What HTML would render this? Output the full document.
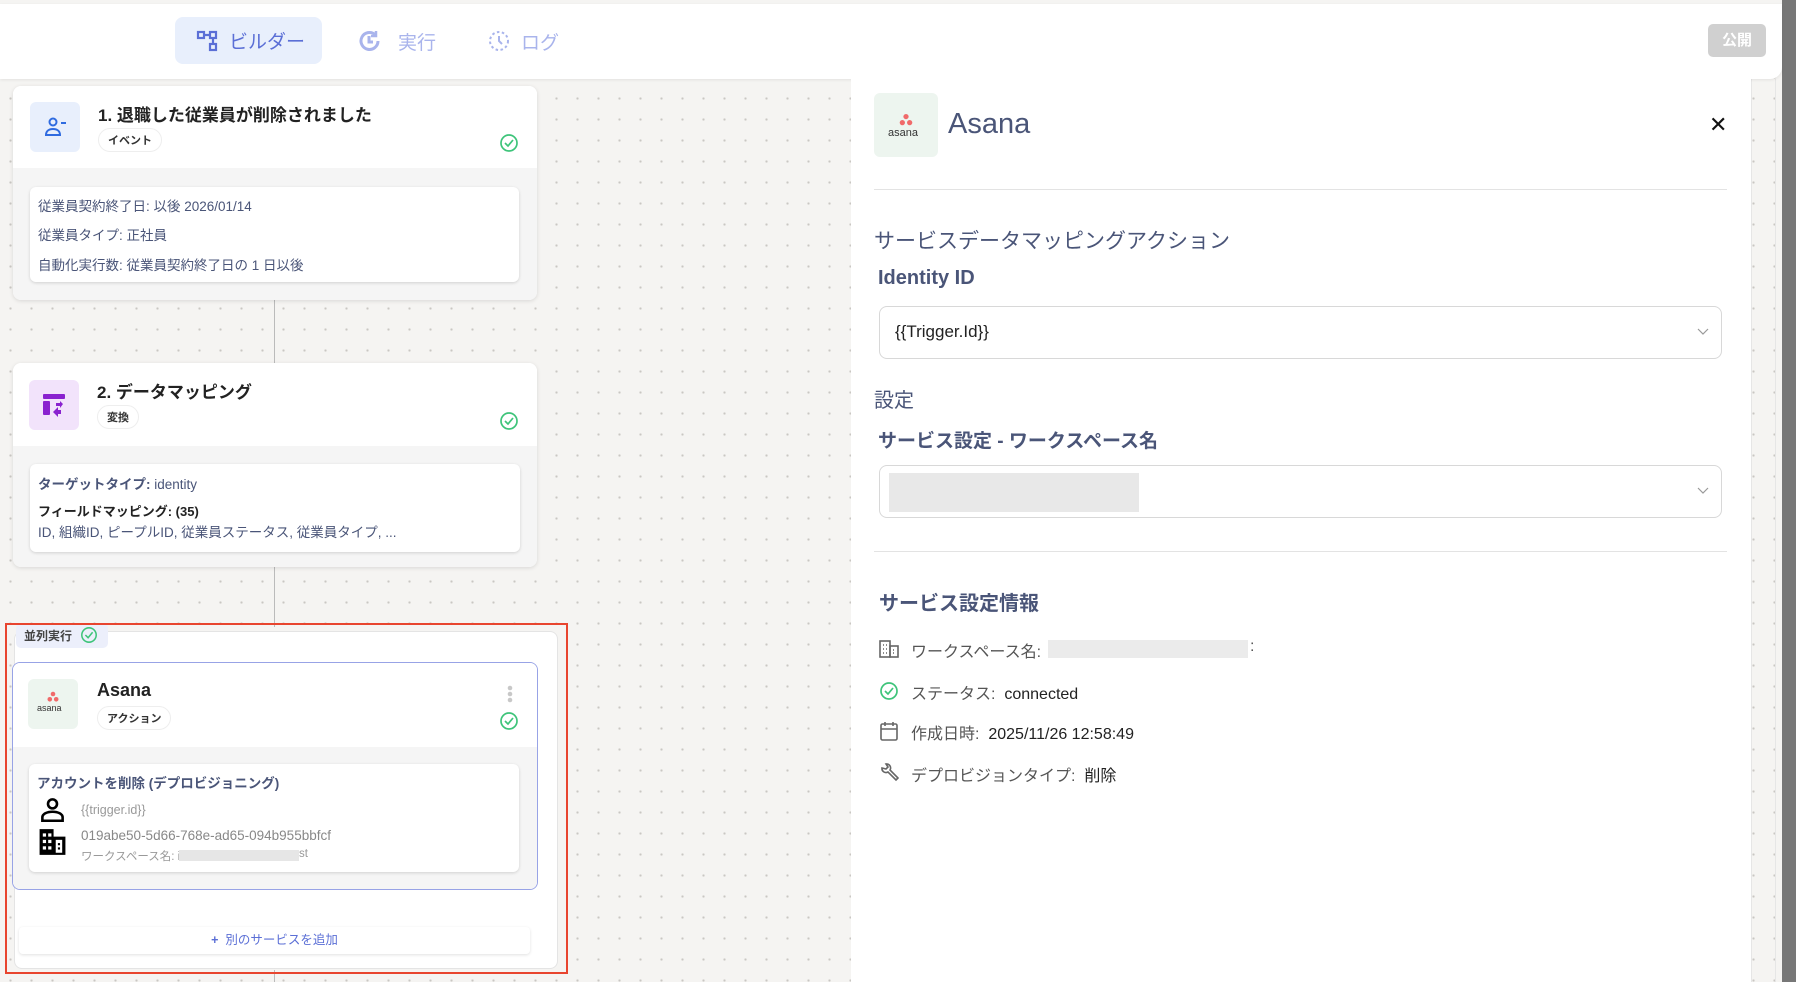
<!DOCTYPE html>
<html><head><meta charset="utf-8">
<style>
*{box-sizing:border-box;margin:0;padding:0}
body{width:1796px;height:982px;overflow:hidden;position:relative;font-family:"Liberation Sans","Noto Sans CJK JP",sans-serif;background-color:#f5f4f2;background-image:radial-gradient(circle,#c9c7c3 1px,transparent 1.3px);background-size:21px 21px;background-position:0 4px}
.a{position:absolute}
.hdr{left:0;top:4px;width:1782px;height:75px;background:#fff;border-radius:0 0 12px 0;box-shadow:0 1px 3px rgba(0,0,0,.08)}
.card{background:#fff;border-radius:8px;box-shadow:0 1px 4px rgba(0,0,0,.12);overflow:hidden}
.ch{background:#fff}
.cb{background:#f5f5f5}
.inner{background:#fff;border-radius:6px;box-shadow:0 1px 3px rgba(0,0,0,.15)}
.tag{border:1px solid #eee;border-radius:12px;font-size:11px;font-weight:bold;color:#333;padding:3px 9px;background:#fff}
.ttl{font-size:17px;font-weight:bold;color:#222}
.t13{font-size:13.5px;color:#4a5578}
.chk{width:20px;height:20px}
.sel{background:#fff;border:1px solid #d8d8d8;border-radius:8px}
.lbl{color:#4a5578}
</style></head><body>
<div class="a" style="left:1782px;top:0;width:14px;height:982px;background:#777"></div>
<div class="a" style="left:1751px;top:79px;width:1px;height:903px;background:#e6e6e6"></div>
<div class="a" style="left:1775px;top:79px;width:1px;height:903px;background:#e6e6e6"></div>

<div class="a hdr"></div>
<div class="a" style="left:175px;top:17px;width:147px;height:47px;background:#e8effc;border-radius:8px"></div>
<svg class="a" style="left:196px;top:29px" width="24" height="24" viewBox="0 0 24 24" fill="none" stroke="#5b6fd6" stroke-width="2.2"><rect x="2" y="3" width="6" height="6"/><rect x="14" y="3" width="6" height="6"/><rect x="14" y="15" width="6" height="6"/><path d="M8 6h6M17 9v6"/></svg>
<div class="a" style="left:229px;top:27px;font-size:19px;color:#5b6fd6">ビルダー</div>
<svg class="a" style="left:357px;top:28px" width="26" height="26" viewBox="0 0 26 26" fill="none" stroke="#a9b4ec" stroke-width="3"><path d="M21 13a8.5 8.5 0 1 1-3-6.5"/><path d="M19 3v5h-5" stroke-width="2.5"/><path d="M12 8v6h4"/></svg>
<div class="a" style="left:398px;top:28px;font-size:19px;color:#a9b4ec">実行</div>
<svg class="a" style="left:488px;top:30px" width="22" height="22" viewBox="0 0 22 22" fill="none" stroke="#a9b4ec" stroke-width="2" stroke-dasharray="2.5 2.5"><circle cx="11" cy="11" r="9"/><path d="M11 6v5l3 3" stroke-dasharray="none"/></svg>
<div class="a" style="left:521px;top:28px;font-size:19px;color:#a9b4ec">ログ</div>
<div class="a" style="left:1708px;top:24px;width:58px;height:33px;background:#d0d0d0;border-radius:5px;color:#fff;font-size:15px;text-align:center;line-height:33px;font-weight:bold">公開</div>

<div class="a" style="left:274px;top:300px;width:1px;height:63px;background:#bbb"></div>
<div class="a" style="left:274px;top:567px;width:1px;height:60px;background:#bbb"></div>
<div class="a" style="left:274px;top:970px;width:1px;height:12px;background:#bbb"></div>

<div class="a card" style="left:13px;top:86px;width:524px;height:214px">
 <div class="ch" style="height:82px;position:relative">
  <div class="a" style="left:17px;top:16px;width:50px;height:50px;background:#e8effc;border-radius:6px"></div>
  <svg class="a" style="left:31px;top:30px" width="24" height="22" viewBox="0 0 24 22" fill="none" stroke="#2f6be0" stroke-width="2"><circle cx="9" cy="6" r="3.5"/><path d="M2 19c0-4 3-6 7-6s7 2 7 6z"/><path d="M17 7h5"/></svg>
  <div class="a ttl" style="left:85px;top:15px">1. 退職した従業員が削除されました</div>
  <div class="a tag" style="left:85px;top:42px">イベント</div>
  <svg class="a chk" style="left:486px;top:47px" viewBox="0 0 20 20" fill="none" stroke="#3ec47a" stroke-width="1.7"><circle cx="10" cy="10" r="8"/><path d="M6 10l3 3 5-6"/></svg>
 </div>
 <div class="cb" style="height:132px;position:relative">
  <div class="a inner" style="left:17px;top:19px;width:489px;height:95px">
   <div class="a t13" style="left:8px;top:8px">従業員契約終了日: 以後 2026/01/14</div>
   <div class="a t13" style="left:8px;top:37px">従業員タイプ: 正社員</div>
   <div class="a t13" style="left:8px;top:67px">自動化実行数: 従業員契約終了日の 1 日以後</div>
  </div>
 </div>
</div>

<div class="a card" style="left:13px;top:363px;width:524px;height:204px">
 <div class="ch" style="height:83px;position:relative">
  <div class="a" style="left:16px;top:17px;width:50px;height:50px;background:#f2e3fb;border-radius:6px"></div>
  <svg class="a" style="left:28px;top:29px" width="26" height="26" viewBox="0 0 26 26" fill="#8a22cf"><rect x="2" y="2" width="22" height="5" rx="1"/><rect x="2" y="9" width="7" height="14" rx="1"/><path d="M12 20l5-5v3h3v4h-3v3z"/><path d="M22 12l-3-3v2h-4v3h4v2z" /></svg>
  <div class="a ttl" style="left:84px;top:15px">2. データマッピング</div>
  <div class="a tag" style="left:84px;top:42px">変換</div>
  <svg class="a chk" style="left:486px;top:48px" viewBox="0 0 20 20" fill="none" stroke="#3ec47a" stroke-width="1.7"><circle cx="10" cy="10" r="8"/><path d="M6 10l3 3 5-6"/></svg>
 </div>
 <div class="cb" style="height:121px;position:relative">
  <div class="a inner" style="left:17px;top:18px;width:490px;height:88px">
   <div class="a t13" style="left:8px;top:9px"><b>ターゲットタイプ:</b> identity</div>
   <div class="a" style="left:8px;top:37px;font-size:13px;font-weight:bold;color:#222">フィールドマッピング: (35)</div>
   <div class="a t13" style="left:8px;top:57px">ID, 組織ID, ピープルID, 従業員ステータス, 従業員タイプ, ...</div>
  </div>
 </div>
</div>

<div class="a" style="left:14px;top:631px;width:544px;height:338px;background:#fff;border:1px solid #e4e4e4;border-radius:8px"></div>
<div class="a" style="left:16px;top:623px;width:92px;height:25px;background:#eceffb;border-radius:5px"></div>
<div class="a" style="left:24px;top:627px;font-size:12px;font-weight:bold;color:#444">並列実行</div>
<svg class="a" style="left:80px;top:626px" width="18" height="18" viewBox="0 0 20 20" fill="none" stroke="#3ec47a" stroke-width="1.7"><circle cx="10" cy="10" r="8"/><path d="M6 10l3 3 5-6"/></svg>
<div class="a" style="left:5px;top:623px;width:563px;height:351px;border:2.5px solid #e8452f"></div>

<div class="a card" style="left:12px;top:662px;width:526px;height:228px;border:1.5px solid #98a3e6;box-shadow:none">
 <div class="ch" style="height:84px;position:relative">
  <div class="a" style="left:15px;top:16px;width:50px;height:50px;background:#edf5ef;border-radius:6px"></div>
  <svg class="a" style="left:33px;top:28px" width="14" height="12" viewBox="0 0 14 12" fill="#f06a6a"><circle cx="7" cy="3" r="2.3"/><circle cx="3.8" cy="8.3" r="2.3"/><circle cx="10.2" cy="8.3" r="2.3"/></svg>
  <div class="a" style="left:24px;top:40px;font-size:9px;color:#333">asana</div>
  <div class="a" style="left:84px;top:17px;font-size:18px;font-weight:bold;color:#222">Asana</div>
  <div class="a tag" style="left:84px;top:43px">アクション</div>
  <svg class="a" style="left:494px;top:22px" width="6" height="18"><circle cx="3" cy="3" r="2.3" fill="#c8c8c8"/><circle cx="3" cy="9" r="2.3" fill="#c8c8c8"/><circle cx="3" cy="15" r="2.3" fill="#c8c8c8"/></svg>
  <svg class="a chk" style="left:486px;top:48px" viewBox="0 0 20 20" fill="none" stroke="#3ec47a" stroke-width="1.7"><circle cx="10" cy="10" r="8"/><path d="M6 10l3 3 5-6"/></svg>
 </div>
 <div class="cb" style="height:144px;position:relative">
  <div class="a inner" style="left:16px;top:17px;width:490px;height:108px">
   <div class="a" style="left:8px;top:8px;font-size:13.5px;font-weight:bold;color:#4a5578">アカウントを削除 (デプロビジョニング)</div>
   <svg class="a" style="left:10px;top:32px" width="27" height="27" viewBox="0 0 24 24" fill="none" stroke="#000" stroke-width="2.3"><circle cx="12" cy="7" r="4"/><path d="M3 22v-3c0-3 4-5 9-5s9 2 9 5v3z"/></svg>
   <div class="a" style="left:52px;top:39px;font-size:12.5px;color:#999">{{trigger.id}}</div>
   <svg class="a" style="left:9px;top:64px" width="29" height="28" viewBox="0 0 26 26"><path fill="#000" d="M1 1h13v7h11v17H1z"/><g fill="#fff"><rect x="4" y="5" width="3" height="3"/><rect x="9" y="5" width="3" height="3"/><rect x="4" y="11" width="3" height="3"/><rect x="9" y="11" width="3" height="3"/><rect x="4" y="17" width="3" height="3"/><rect x="9" y="17" width="3" height="3"/><rect x="16" y="11" width="6" height="12"/></g><g fill="#000"><rect x="18" y="14" width="2" height="2"/><rect x="18" y="18" width="2" height="2"/></g></svg>
   <div class="a" style="left:52px;top:64px;font-size:13.5px;color:#888">019abe50-5d66-768e-ad65-094b955bbfcf</div>
   <div class="a" style="left:52px;top:84px;font-size:11.5px;color:#999">ワークスペース名: i</div>
   <div class="a" style="left:150px;top:86px;width:120px;height:11px;background:#e6e6e6"></div>
   <div class="a" style="left:270px;top:84px;font-size:11.5px;color:#999">st</div>
  </div>
 </div>
</div>

<div class="a" style="left:19px;top:927px;width:511px;height:27px;background:#fff;border-radius:4px;box-shadow:0 1px 3px rgba(0,0,0,.12);text-align:center;font-size:12.5px;color:#5b6fd6;line-height:27px"><b>+</b>&nbsp; 別のサービスを追加</div>

<div class="a" style="left:851px;top:79px;width:900px;height:903px;background:#fff"></div>
<div class="a" style="left:874px;top:93px;width:64px;height:64px;background:#edf5ef;border-radius:6px"></div>
<svg class="a" style="left:898px;top:113px" width="16" height="14" viewBox="0 0 14 12" fill="#f06a6a"><circle cx="7" cy="3" r="2.3"/><circle cx="3.8" cy="8.3" r="2.3"/><circle cx="10.2" cy="8.3" r="2.3"/></svg>
<div class="a" style="left:888px;top:127px;font-size:11px;color:#333">asana</div>
<div class="a" style="left:948px;top:108px;font-size:29px;color:#4a5578">Asana</div>
<div class="a" style="left:1709px;top:112px;font-size:22px;color:#111">✕</div>
<div class="a" style="left:874px;top:189px;width:853px;height:1px;background:#e3e3e3"></div>
<div class="a lbl" style="left:874px;top:225px;font-size:21px">サービスデータマッピングアクション</div>
<div class="a lbl" style="left:878px;top:267px;font-size:20px;font-weight:bold">Identity ID</div>
<div class="a sel" style="left:879px;top:306px;width:843px;height:53px"></div>
<div class="a" style="left:895px;top:322px;font-size:17px;color:#222">{{Trigger.Id}}</div>
<svg class="a" style="left:1697px;top:328px" width="12" height="8"><path d="M1 1l5 5 5-5" fill="none" stroke="#999" stroke-width="1.2"/></svg>
<div class="a lbl" style="left:874px;top:384px;font-size:20px">設定</div>
<div class="a lbl" style="left:878px;top:426px;font-size:19px;font-weight:bold">サービス設定 - ワークスペース名</div>
<div class="a sel" style="left:879px;top:465px;width:843px;height:53px"></div>
<div class="a" style="left:889px;top:473px;width:250px;height:39px;background:#e8e8e8"></div>
<svg class="a" style="left:1697px;top:487px" width="12" height="8"><path d="M1 1l5 5 5-5" fill="none" stroke="#999" stroke-width="1.2"/></svg>
<div class="a" style="left:874px;top:551px;width:853px;height:1px;background:#e3e3e3"></div>
<div class="a lbl" style="left:879px;top:587px;font-size:20px;font-weight:bold">サービス設定情報</div>

<svg class="a" style="left:879px;top:640px" width="20" height="18" viewBox="0 0 20 18" fill="none" stroke="#666" stroke-width="1.6"><rect x="1" y="1" width="10" height="16"/><rect x="11" y="6" width="8" height="11"/><path d="M4 5h1M7 5h1M4 9h1M7 9h1M4 13h1M7 13h1M14 10h1M14 13h1"/></svg>
<div class="a" style="left:911px;top:638px;font-size:16px;color:#555">ワークスペース名:</div>
<div class="a" style="left:1048px;top:640px;width:200px;height:18px;background:#ebebeb"></div>
<div class="a" style="left:1250px;top:638px;font-size:16px;color:#555">:</div>

<svg class="a" style="left:879px;top:681px" width="20" height="20" viewBox="0 0 20 20" fill="none" stroke="#3ec47a" stroke-width="1.7"><circle cx="10" cy="10" r="8"/><path d="M6 10l3 3 5-6"/></svg>
<div class="a" style="left:911px;top:680px;font-size:16px;color:#555">ステータス:&nbsp; <span style="color:#222">connected</span></div>

<svg class="a" style="left:879px;top:721px" width="20" height="20" viewBox="0 0 20 20" fill="none" stroke="#666" stroke-width="1.6"><rect x="2" y="3" width="16" height="16" rx="1.5"/><path d="M2 8h16M6 1v4M14 1v4"/></svg>
<div class="a" style="left:911px;top:720px;font-size:16px;color:#555">作成日時:&nbsp; <span style="color:#222">2025/11/26 12:58:49</span></div>

<svg class="a" style="left:879px;top:763px" width="20" height="20" viewBox="0 0 20 20" fill="none" stroke="#666" stroke-width="1.6"><path d="M3 5a4 4 0 0 0 6 4l8 8 2-2-8-8a4 4 0 0 0-4-6l2 3-2 2z"/></svg>
<div class="a" style="left:911px;top:762px;font-size:16px;color:#555">デプロビジョンタイプ:&nbsp; <span style="color:#222">削除</span></div>
</body></html>
